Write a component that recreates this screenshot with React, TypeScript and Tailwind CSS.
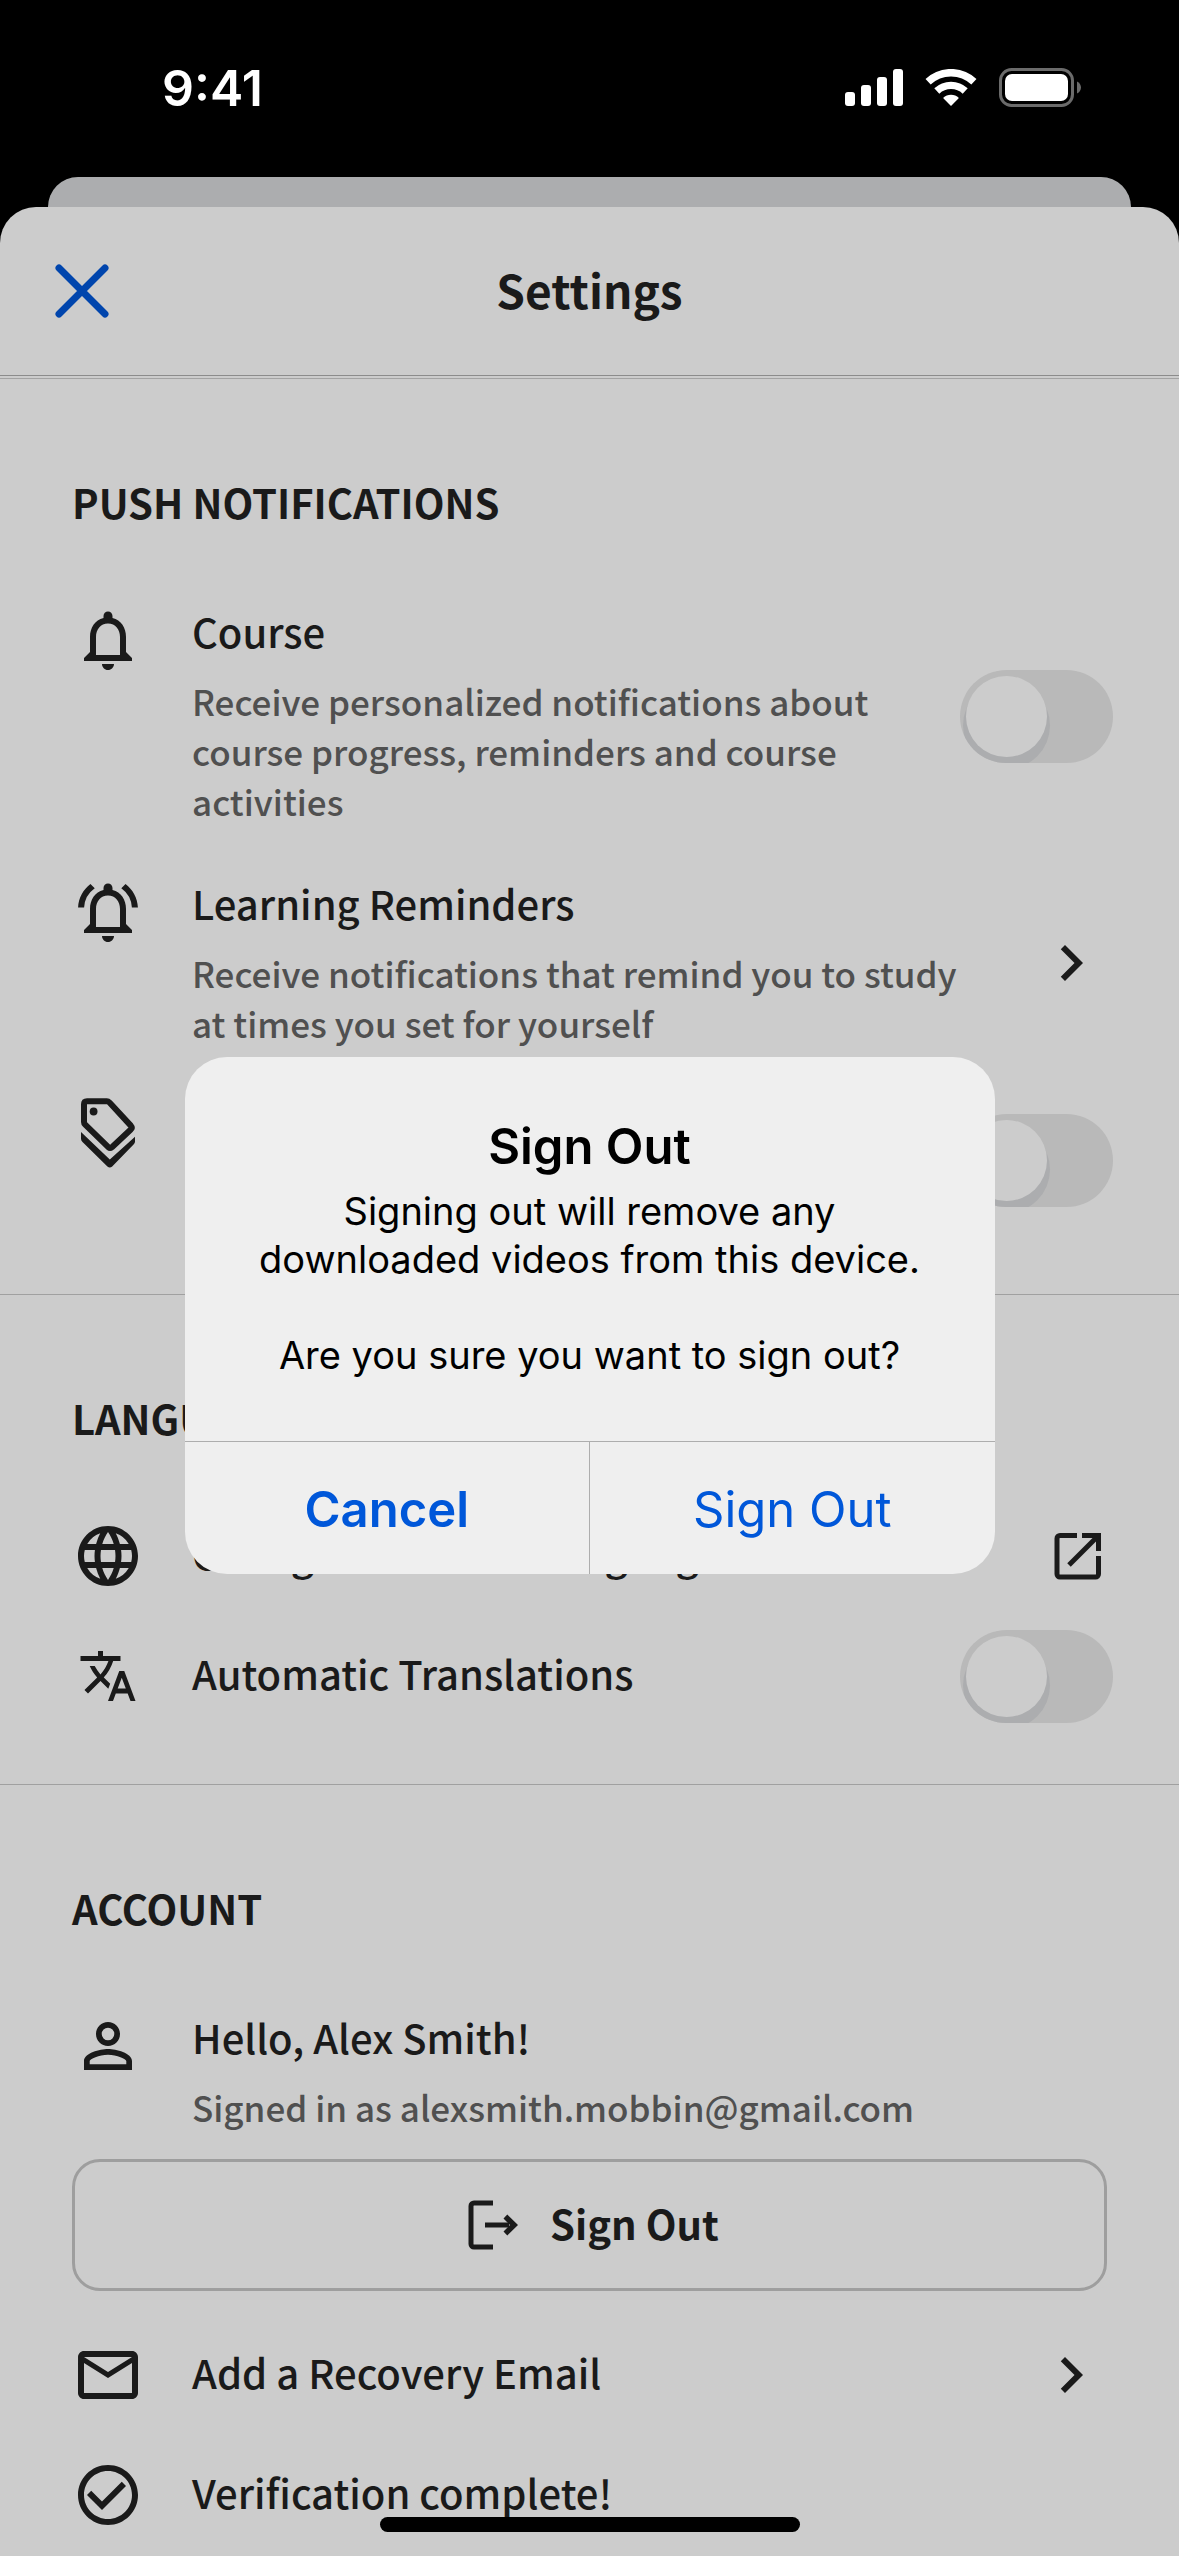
import React, { useId, useState } from 'react';
import {
  MdCheckCircleOutline,
  MdChevronRight,
  MdLanguage,
  MdMailOutline,
  MdOutlineNotifications,
  MdOutlineNotificationsActive,
  MdPersonOutline,
  MdTranslate,
} from 'react-icons/md';

const TagsIcon = () => (
  <svg viewBox="0 0 24 24" className="size-[72px]" fill="currentColor">
    <path
      d="M4 2.100Q4 1.100 5 1.100H11.600Q12.100 1.100 12.500 1.500L19.600 9.200Q20.200 9.900 19.600 10.500L13.300 16.400Q12.700 16.900 12.100 16.400L4.400 8.900Q4 8.500 4 8z"
      fill="none"
      stroke="currentColor"
      strokeWidth={2}
      strokeLinejoin="round"
    />
    <path d="M3 11.300L12.600 20.500L21 12.900V14.500Q21 15 20.600 15.400L13.400 22.800Q12.600 23.500 11.800 22.800L3.500 14.700Q3 14.200 3 13.600z" />
    <circle cx="7.2" cy="4.5" r="1.3" />
  </svg>
);

const ExternalIcon = () => (
  <svg viewBox="0 0 60 60" className="size-[60px]" fill="none" stroke="currentColor" strokeWidth={5}>
    <path d="M30 9.500H13a3 3 0 0 0-3 3V48a3 3 0 0 0 3 3h35.500a3 3 0 0 0 3-3V30" />
    <path d="M35 9.500h16.500V25" />
    <path d="M22 39L50.500 10.500" />
  </svg>
);

const LeaveIcon = () => (
  <svg viewBox="-8 0 58 50" className="h-[50px] w-[58px]" fill="none" stroke="currentColor" strokeWidth={5}>
    <path d="M25 3H6a3 3 0 0 0-3 3v38a3 3 0 0 0 3 3H25" />
    <path d="M17 25h24" />
    <path d="M35.500 18.500l3.800-4L50 25L39.300 35.500l-3.800-4L42 25z" fill="currentColor" stroke="none" />
  </svg>
);

const CloseIcon = () => (
  <svg viewBox="0 0 54 54" className="size-[54px]" fill="none" stroke="currentColor" strokeWidth={7} strokeLinecap="round">
    <path d="M4 4l46 46M50 4L4 50" />
  </svg>
);

const StatusBar = () => (
  <div className="flex items-center justify-between h-[177px] pl-[162px] pr-[98px] pb-0.5 text-white">
    <span className="font-['Inter',sans-serif] text-[50px] leading-[60px] font-semibold">9:41</span>
    <div className="flex items-center gap-[22px]">
      <svg viewBox="0 0 58 38" className="h-[38px] w-[58px]" fill="currentColor">
        <rect x="0" y="23" width="10" height="14" rx="3" />
        <rect x="16" y="16" width="10" height="21" rx="3" />
        <rect x="32" y="8" width="10" height="29" rx="3" />
        <rect x="48" y="0" width="10" height="37" rx="3" />
      </svg>
      <svg viewBox="0 0 52 38" className="h-[38px] w-[52px]" fill="none" stroke="currentColor">
        <path d="M3.100 12.800A33.300 33.300 0 0 1 48.900 12.800" strokeWidth="7.5" />
        <path d="M11.800 22A20.700 20.700 0 0 1 40.200 22" strokeWidth="7.300" />
        <path d="M18.100 28.900A11.500 11.500 0 0 1 33.900 28.900L26 37z" fill="currentColor" stroke="none" />
      </svg>
      <svg viewBox="0 0 82 40" className="h-[40px] w-[82px]">
        <rect x="1.500" y="1.500" width="72" height="36" rx="11" fill="none" stroke="#6b6b6b" strokeWidth="3" />
        <rect x="6" y="6" width="63" height="27" rx="7" fill="white" />
        <path d="M78 13.500c2.500 1.200 4 3.600 4 6s-1.500 4.800-4 6z" fill="#6b6b6b" />
      </svg>
    </div>
  </div>
);

const Toggle: React.FC<{ id: string }> = ({ id }) => {
  const [on, setOn] = useState(false);
  return (
    <span className="relative -my-3 -mr-1.5 block h-[93px] w-[153px] flex-shrink-0 overflow-hidden rounded-full bg-[#b9b9b9]">
      <input
        id={id}
        type="checkbox"
        role="switch"
        checked={on}
        onChange={() => setOn(!on)}
        className="peer absolute inset-0 size-full appearance-none rounded-full checked:bg-[#0045ad]"
      />
      <span className="pointer-events-none absolute top-1.5 left-1.5 size-[81px] rounded-full bg-[#cccccc] shadow-[0_9px_0_3px_#acadaf] peer-checked:left-[66px]" />
    </span>
  );
};

interface RowProps {
  icon: React.ReactNode;
  title: string;
  detail?: string;
  toggle?: boolean;
  control?: React.ReactNode;
}

const Row: React.FC<RowProps> = ({ icon, title, detail, toggle, control }) => {
  const id = useId();
  const body = (
    <>
      <span className={`block text-[40px] leading-[54px] text-[#1a1a1a] ${detail ? '' : 'pt-1.5 pb-3'}`}>{title}</span>
      {detail && <span className="mt-[18px] block pb-0.5 text-[35px] leading-[50px] text-[#505050]">{detail}</span>}
    </>
  );
  return (
    <div className="flex items-center gap-12 font-medium">
      <span className="self-start flex-shrink-0 text-[72px]">{icon}</span>
      {toggle ? <label htmlFor={id} className="min-w-0 flex-1">{body}</label> : <div className="min-w-0 flex-1">{body}</div>}
      {toggle ? <Toggle id={id} /> : control}
    </div>
  );
};

const MoreButton: React.FC<{ label: string }> = ({ label }) => (
  <button aria-label={label} className="flex-shrink-0 text-[72px]">
    <MdChevronRight />
  </button>
);

const Section: React.FC<{ title: string; children: React.ReactNode }> = ({ title, children }) => (
  <section className="border-b border-[#a0a0a0] px-[72px] pt-[93px] pb-[72px] last:border-0">
    <h2 className="text-[40px] leading-[60px] font-bold uppercase">{title}</h2>
    <div className="mt-[72px] flex flex-col gap-12">{children}</div>
  </section>
);

const SignOutDialog = () => (
  <div className="absolute inset-0 flex items-center justify-center pt-[75px] font-['Inter',sans-serif]">
    <div role="alertdialog" aria-labelledby="dialog-title" className="w-[810px] max-w-full overflow-hidden rounded-[42px] bg-[#efefef] text-center text-black">
      <div className="px-12 pt-[60px] pb-[62px]">
        <h2 id="dialog-title" className="text-[49px] leading-[60px] font-semibold">Sign Out</h2>
        <p className="mt-2.5 text-[38px] leading-[48px]">Signing out will remove any downloaded videos from this device.</p>
        <p className="mt-12 text-[38px] leading-[48px]">Are you sure you want to sign out?</p>
      </div>
      <div className="flex border-t border-[#adadad] text-[49px] leading-[60px] text-[#0057d9]">
        <button className="flex-1 pt-[38px] pb-[34px] font-semibold">Cancel</button>
        <button className="flex-1 border-l border-[#adadad] pt-[38px] pb-[34px]">Sign Out</button>
      </div>
    </div>
  </div>
);

const App = () => {
  return (
    <div className="relative h-screen overflow-hidden bg-black font-['Noto_Sans_CJK_SC',sans-serif] text-[#1a1a1a]">
      <StatusBar />
      <div className="mx-12 h-[30px] rounded-t-[30px] bg-[#acadaf]" />
      <main className="min-h-full rounded-t-[36px] bg-[#cccccc]">
        <header className="grid h-[169px] grid-cols-[54px_1fr_54px] items-center border-b border-[#8c8c8c] px-[55px]">
          <button aria-label="Close" className="text-[#0045ad]">
            <CloseIcon />
          </button>
          <h1 className="pb-1 text-center text-[46px] leading-[60px] font-bold">Settings</h1>
        </header>

        <div className="mt-0.5 border-t border-[#a3a3a3]">
          <Section title="Push Notifications">
            <Row
              icon={<MdOutlineNotifications />}
              title="Course"
              detail="Receive personalized notifications about course progress, reminders and course activities"
              toggle
            />
            <Row
              icon={<MdOutlineNotificationsActive />}
              title="Learning Reminders"
              detail="Receive notifications that remind you to study at times you set for yourself"
              control={<MoreButton label="Learning Reminders" />}
            />
            <Row icon={<TagsIcon />} title="Promotions" detail="Receive offers and discounts" toggle />
          </Section>

          <Section title="Language">
            <Row
              icon={<MdLanguage />}
              title="Change Preferred Language"
              control={
                <a href="#language" aria-label="Change Preferred Language" className="flex-shrink-0">
                  <ExternalIcon />
                </a>
              }
            />
            <Row icon={<MdTranslate className="m-1.5 size-[60px]" />} title="Automatic Translations" toggle />
          </Section>

          <Section title="Account">
            <div>
              <Row icon={<MdPersonOutline />} title="Hello, Alex Smith!" detail="Signed in as alexsmith.mobbin@gmail.com" />
              <button className="mt-[25px] flex h-[132px] w-full items-center justify-center gap-8 rounded-[28px] border-3 border-[#9e9e9e] text-[40px] font-bold">
                <LeaveIcon />
                <span className="pb-1">Sign Out</span>
              </button>
            </div>
            <Row icon={<MdMailOutline />} title="Add a Recovery Email" control={<MoreButton label="Add a Recovery Email" />} />
            <Row icon={<MdCheckCircleOutline />} title="Verification complete!" />
          </Section>
        </div>
      </main>

      <SignOutDialog />
      <div className="absolute inset-x-0 bottom-6 mx-auto h-[15px] w-[420px] rounded-full bg-black" />
    </div>
  );
};

export default App;
